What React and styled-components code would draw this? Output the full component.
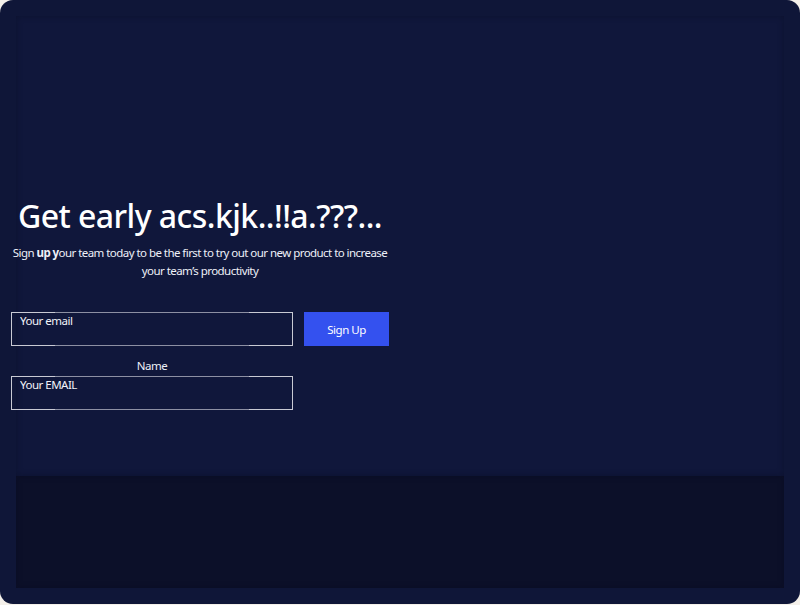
import React from "react";
import { styled, createGlobalStyle } from "styled-components";

const GlobalStyle = createGlobalStyle`
  html, body {
    margin: 0;
    background: #f4f0ea;
  }
  * {
    box-sizing: border-box;
  }
`;

function App() {
  return (
    <>
      <GlobalStyle />
      <Card>
        <Hero>
          <Content>
            <Title>Get early acs.kjk..!!a.???...</Title>
            <Subtitle>
              Sign <b>up y</b>our team today to be the first to try out our new
              product to increase your team’s productivity
            </Subtitle>
            <Form>
              <Row>
                <Field placeholder="Your email" />
                <SignUpBtn type="button">Sign Up</SignUpBtn>
              </Row>
              <Label>Name</Label>
              <Field placeholder="Your EMAIL" />
            </Form>
          </Content>
        </Hero>
        <Footer />
      </Card>
    </>
  );
}

export default App;

const Card = styled.div`
  width: 800px;
  height: 604px;
  border-radius: 13px;
  background: #0f1638;
  padding: 16px 16px;
  display: flex;
  flex-direction: column;
  font-family: "Noto Sans", sans-serif;
  letter-spacing: -0.5px;
  color: #fff;
`;

const Hero = styled.section`
  height: 460px;
  background: #10173b;
  box-shadow: inset 0 0 6px rgba(5, 8, 25, 0.35);
  display: flex;
  padding-top: 178px;
`;

const Content = styled.div`
  width: 378px;
  margin-left: -5px;
  display: flex;
  flex-direction: column;
  align-items: center;
`;

const Title = styled.h1`
  margin: 0;
  font-size: 32px;
  font-weight: 500;
  line-height: 44px;
  letter-spacing: -0.55px;
  white-space: nowrap;
`;

const Subtitle = styled.p`
  margin: 6px -4px 0;
  font-size: 11.5px;
  line-height: 18px;
  letter-spacing: -0.55px;
  text-align: center;
  color: #eef0f8;

  b {
    font-weight: 700;
  }
`;

const Form = styled.div`
  margin-top: 32px;
  align-self: stretch;
  display: flex;
  flex-direction: column;
`;

const Row = styled.div`
  display: flex;
  gap: 11px;
`;

const Field = styled.input`
  width: 282px;
  height: 34px;
  margin: 0;
  padding: 0 8px 17px;
  background: transparent;
  border: 1px solid;
  border-image: linear-gradient(
      to right,
      #c9cad4 0,
      #c9cad4 44px,
      #8d90a3 44px,
      #8d90a3 238px,
      #c9cad4 238px
    )
    1;
  font-family: inherit;
  letter-spacing: inherit;
  font-size: 11.5px;
  color: #fff;
  outline: none;

  &::placeholder {
    color: #f2f3f8;
    opacity: 1;
  }
`;

const SignUpBtn = styled.button`
  width: 85px;
  height: 34px;
  border: none;
  background: #3451ef;
  color: #fff;
  font-family: inherit;
  letter-spacing: inherit;
  font-size: 11.5px;
  cursor: pointer;
`;

const Label = styled.div`
  width: 282px;
  text-align: center;
  font-size: 11.5px;
  line-height: 16px;
  margin: 12px 0 2px;
  color: #eef0f8;
`;

const Footer = styled.div`
  height: 112px;
  background: #0c1029;
  box-shadow: inset 0 0 6px rgba(5, 8, 25, 0.3);
`;
